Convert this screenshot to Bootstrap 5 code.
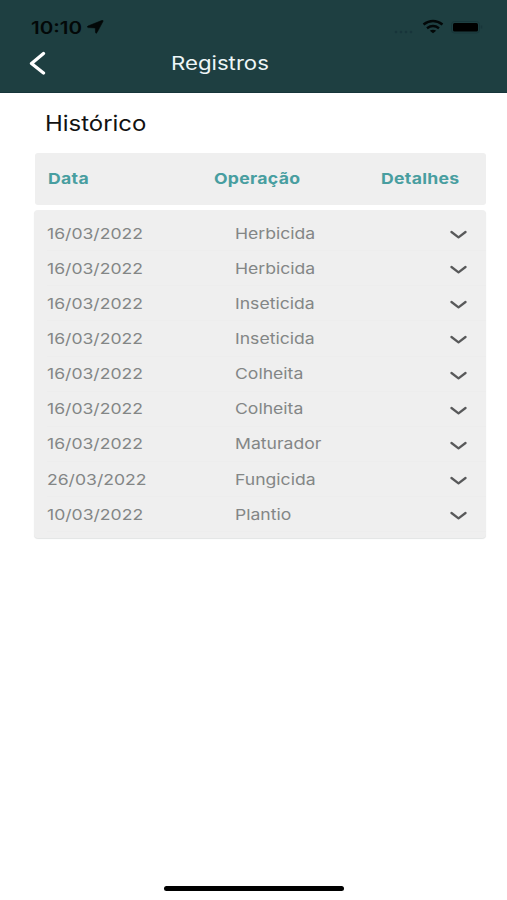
<!DOCTYPE html>
<html lang="pt-BR">
<head>
<meta charset="utf-8">
<meta name="viewport" content="width=device-width, initial-scale=1">
<title>Registros</title>
<link href="https://cdn.jsdelivr.net/npm/bootstrap@5.3.0/dist/css/bootstrap.min.css" rel="stylesheet">
<style>
body{font-family:Inter,"Liberation Sans",sans-serif;height:900px;overflow:hidden}
.wide{display:inline-block;transform:scaleX(1.172);transform-origin:0 50%;white-space:nowrap;line-height:1}
.app-head{background:#1e3f41;height:93px;border-bottom:1px solid #16353a}
.status-line{height:44px;padding:11px 24px 0 31px;color:#030808}
.clock{font-size:17px;font-weight:600;width:56px}
.clock .wide{transform:scaleX(1.21);margin-top:2px}
.location{margin-top:9px}
.title-line{height:38px;padding-left:28px}
.screen-title{font-size:18.5px;color:#eef6f8;margin-left:125px;transform:scaleX(1.2)}
.section-title{font-size:21px;color:#111;padding:0 0 0 45px;height:60px}
.section-title .wide{transform:scaleX(1.14)}
.panel{margin:0 21px 0 35px;background:#efefef;border-radius:3px}
.head-row{height:52px;font-size:15px;font-weight:700;color:#489ea0;padding-left:13px;letter-spacing:.25px}
.head-row .wide{transform:scaleX(1.175)}
.records{margin-top:5px;margin-left:34px;height:328px;padding:6px 0 0 13px;border-radius:4px;box-shadow:0 1px 1px #e2e4e4}
.record{height:35.15px;font-size:15px;color:#838686;border-bottom:1px solid #ededed}
.record .col-date,.record .col-op{padding-top:1.5px}
.col-date{width:188px}
.col-op{width:215px}
.head-row .col-date{width:166px}
.head-row .col-op{width:166.5px}
.home-bar{width:180px;height:5px;border-radius:3px;background:#000;margin-bottom:9px}
</style>
</head>
<body class="d-flex flex-column bg-white m-0">
<header class="app-head flex-shrink-0">
  <div class="status-line d-flex">
    <div class="clock d-flex align-items-center"><span class="wide">10:10</span></div>
    <svg class="location flex-shrink-0" width="17" height="14" viewBox="0 0 17 14" fill="#030808" stroke="#030808" stroke-width=".6"><path d="M1 6 14.600.6Q16.800 0 15.900 1.600L10 12.600Q8.800 14.200 8.500 12.300L8.300 7.900 1.300 7.600Q-.6 7 1 6Z"/></svg>
    <svg class="ms-auto" width="90" height="33" viewBox="0 0 90 33">
      <g fill="#17343a"><circle cx="3" cy="21" r="1.300"/><circle cx="8" cy="21" r="1.300"/><circle cx="13" cy="21" r="1.300"/><circle cx="18" cy="21" r="1.300"/></g>
      <g fill="none" stroke="#030808" stroke-width="2.500"><path d="M30.500 13.500Q40 6.500 49.500 13.500"/><path d="M34 17.200Q40 13 46 17.200"/></g>
      <path d="M36.800 19.700Q40 17.600 43.200 19.700L40 22.300Z" fill="#030808"/>
      <rect x="58.500" y="10.500" width="28" height="11.500" rx="3" fill="none" stroke="#18363a"/>
      <rect x="60" y="12" width="25" height="8.500" rx="1.500" fill="#000"/>
      <path d="M88.500 14.500v3" stroke="#18363a" stroke-width="1.500"/>
    </svg>
  </div>
  <div class="title-line d-flex align-items-center">
    <svg width="18" height="24" viewBox="0 0 18 24" fill="none" stroke="#fff" stroke-width="3.300" stroke-linecap="round" stroke-linejoin="round"><path d="M15.500 2.500 3.500 12.500 15.500 22"/></svg>
    <span class="wide screen-title">Registros</span>
  </div>
</header>
<main class="flex-grow-1">
  <div class="section-title d-flex align-items-center"><span class="wide">Histórico</span></div>
  <div class="panel head-row d-flex align-items-center">
    <div class="col-date"><span class="wide">Data</span></div>
    <div class="col-op"><span class="wide">Operação</span></div>
    <div><span class="wide">Detalhes</span></div>
  </div>
  <div class="panel records" id="records"></div>
</main>
<footer class="d-flex justify-content-center"><div class="home-bar"></div></footer>
<script src="https://cdn.jsdelivr.net/npm/bootstrap@5.3.0/dist/js/bootstrap.bundle.min.js"></script>
<script>
const rows=[["16/03/2022","Herbicida"],["16/03/2022","Herbicida"],["16/03/2022","Inseticida"],["16/03/2022","Inseticida"],["16/03/2022","Colheita"],["16/03/2022","Colheita"],["16/03/2022","Maturador"],["26/03/2022","Fungicida"],["10/03/2022","Plantio"]];
document.getElementById("records").innerHTML=rows.map(([d,o])=>`<div class="record d-flex align-items-center"><div class="col-date"><span class="wide">${d}</span></div><div class="col-op"><span class="wide">${o}</span></div><svg class="mt-1" width="17" height="10" viewBox="0 0 17 10" fill="none" stroke="#58595a" stroke-width="2.300" stroke-linecap="round" stroke-linejoin="round"><path d="M1.500 2 8.500 7.300 15.500 2"/></svg></div>`).join("");
</script>
</body>
</html>
